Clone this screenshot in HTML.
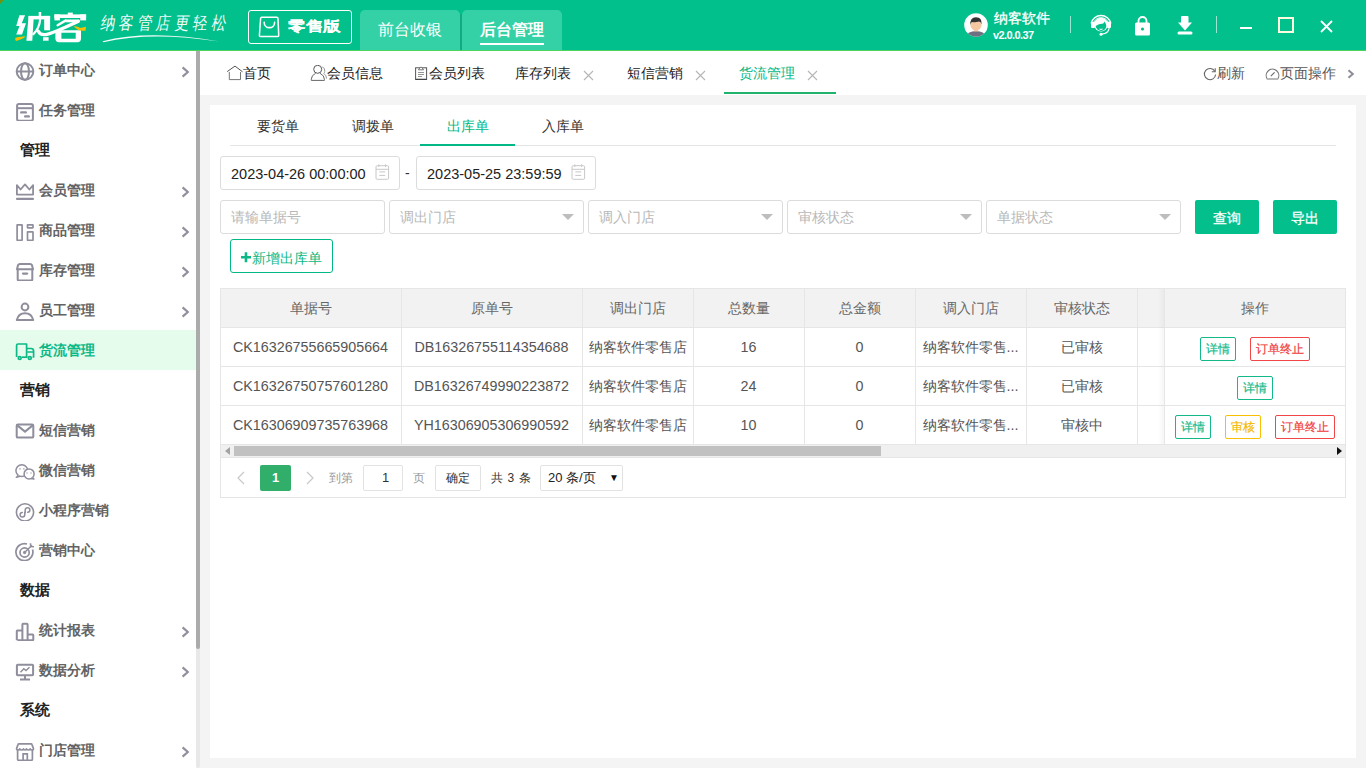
<!DOCTYPE html>
<html><head><meta charset="utf-8">
<style>
*{box-sizing:border-box;margin:0;padding:0}
html,body{width:1366px;height:768px;overflow:hidden;background:#f4f4f4;font-family:"Liberation Sans",sans-serif;font-size:14px;color:#333}
.a{position:absolute;white-space:nowrap}
#hdr{position:absolute;left:0;top:0;width:1366px;height:51px;background:#02c08c;border-bottom:1px solid #4cd55e}
#side{position:absolute;left:0;top:51px;width:196px;height:717px;background:#fff}
#sb{position:absolute;left:196px;top:51px;width:4px;height:717px;background:#e8e8e8;border-radius:0 0 2px 2px}
#sbt{position:absolute;left:196px;top:51px;width:4px;height:598px;background:#ababab;border-radius:0 0 2px 2px}
.mi{position:absolute;left:0;width:196px;height:40px}
.mi .t{position:absolute;left:39px;top:0;line-height:40px;font-weight:bold;color:#636363;font-size:14px}
.mi .ic{position:absolute;left:15px;top:10.5px;width:20px;height:20px}
.mi .ch{position:absolute;left:181px;top:15.5px;width:10px;height:12px}
.sec{position:absolute;left:20px;font-weight:bold;font-size:15px;color:#222;line-height:40px}
#tabs{position:absolute;left:200px;top:51px;width:1166px;height:44px;background:#fff}
.tb{position:absolute;top:0;line-height:44px;font-size:14px;color:#222}
#panel{position:absolute;left:210px;top:105px;width:1146px;height:653px;background:#fff}
</style></head><body>
<div id="hdr">
<svg class="a" style="left:0;top:0" width="5" height="5"><path d="M0 0 H4 L0 4Z" fill="#6e9410"/></svg>
<svg class="a" style="left:0;top:0" width="95" height="50" viewBox="0 0 95 50">
<g fill="#fff">
<path d="M19.4 15.2 H25.1 L21.7 23.3 H26 L22 34.6 H16.2 L19.6 26.1 H16.2 Z"/>
<path d="M28.6 15.9 H33.8 L32.3 40.7 H26.4 Z"/>
<rect x="28.6" y="15.9" width="21.5" height="3.5"/>
<rect x="38.7" y="12" width="2.5" height="7"/>
<rect x="44.2" y="15.9" width="5.9" height="14.4"/>
<rect x="43" y="37.2" width="5.6" height="3.5"/>
<rect x="54.4" y="14.4" width="31.7" height="3.6"/>
<rect x="54.4" y="14.4" width="5.5" height="6"/>
<rect x="80.2" y="14.4" width="5.9" height="6"/>
<rect x="67.8" y="12.6" width="5" height="3"/>
<rect x="65.5" y="19.5" width="13.2" height="2.8"/>
<path d="M56.5 30.3 H81 V38.5 Q81 42.2 77.5 42.2 H59 Q55.4 42.2 55.4 38.5 V31.5 Z M61.4 32.8 V38.7 H75.7 V32.8 Z" fill-rule="evenodd"/>
</g>
<g stroke="#fff" fill="none" stroke-linecap="round">
<path d="M40.2 19 Q39.6 28 33.3 34.3" stroke-width="2.2"/>
<path d="M57.6 25.2 L65.5 20.6" stroke-width="2.4"/>
<path d="M38.3 31.2 Q40 35.4 46 34.6 Q52 33.5 78.5 21.2" stroke-width="3.2"/>
</g>
<path d="M15.2 38.6 Q15.6 37 19 36.9 L25.4 36.2 Q24.6 38.4 21 39.3 L16.2 40.9 Q15 40.4 15.2 38.6Z" fill="#f7bd00"/>
<path d="M73.7 26.3 Q77 25.6 80.2 28 L86 26.8 L85.6 30.4 Q82 31.2 78.4 29.9 Q75.4 28.6 73.7 26.3Z" fill="#f7bd00"/>
</svg>
<div class="a" style="left:101px;top:11.5px;font-size:14.5px;line-height:22px;color:#fff;letter-spacing:3.5px;transform:skewX(-10deg) scaleY(1.22);transform-origin:0 50%;font-family:'Liberation Serif',serif;opacity:.95">纳客管店更轻松</div>
<svg class="a" style="left:0;top:0" width="240" height="50"><path d="M102.5 41.2 Q150 29.2 219.5 41.6 Q150 30.9 103.5 42.3 Z" fill="#fff" opacity=".95"/></svg>
<div class="a" style="left:248px;top:10px;width:104px;height:34px;border:1.5px solid #fff;border-radius:3px"></div>
<svg class="a" style="left:258px;top:16px" width="23" height="22" viewBox="0 0 23 22"><path d="M3.8 1.3 H18.8 Q19.9 1.3 20 2.5 L20.7 19.4 Q20.7 20.6 19.5 20.6 H2.6 Q1.4 20.6 1.4 19.4 L2.6 2.5 Q2.7 1.3 3.8 1.3Z" stroke="#fff" stroke-width="1.5" fill="none"/><path d="M6.2 6.4 C6.2 13.4 16.6 13.4 16.6 6.4" stroke="#fff" stroke-width="1.6" fill="none" stroke-linecap="round"/></svg>
<div class="a" style="left:288px;top:15px;font-size:17px;line-height:24px;font-weight:bold;color:#fff;transform:scaleY(.8);transform-origin:0 55%;-webkit-text-stroke:.15px #fff;letter-spacing:.6px">零售版</div>
<div class="a" style="left:460px;top:14px;width:2px;height:36px;background:#12ab80"></div><div class="a" style="left:360px;top:10px;width:100.3px;height:40px;background:#33d1a5;border-radius:5px 5px 0 0"></div>
<div class="a" style="left:378px;top:18px;font-size:16px;line-height:24px;color:#fff">前台收银</div>
<div class="a" style="left:461.6px;top:10px;width:100.4px;height:40px;background:#33d1a5;border-radius:5px 5px 0 0"></div>
<div class="a" style="left:480px;top:18px;font-size:16px;line-height:24px;color:#fff;font-weight:bold">后台管理</div>
<div class="a" style="left:480px;top:43px;width:64px;height:2px;background:#fff"></div>
<svg class="a" style="left:964px;top:13px" width="24" height="24" viewBox="0 0 24 24"><defs><clipPath id="av"><circle cx="12" cy="12" r="11.8"/></clipPath></defs>
<circle cx="12" cy="12" r="11.8" fill="#fff"/><g clip-path="url(#av)">
<ellipse cx="12" cy="23.5" rx="9.5" ry="5.6" fill="#6f7183"/>
<rect x="10.2" y="14.5" width="3.6" height="4" fill="#f0c09a"/>
<ellipse cx="12" cy="12.3" rx="5.5" ry="5.3" fill="#f5c8a2"/>
<path d="M6.3 12 Q5.8 4.3 12 4.2 Q18.2 4.3 17.6 11.5 Q16.8 8.6 15 8.6 Q11 9.6 8 8.9 Q6.9 9.5 6.3 12Z" fill="#333"/>
</g></svg>
<div class="a" style="left:994px;top:9px;font-size:14px;line-height:18px;color:#fff;font-weight:normal;-webkit-text-stroke:.3px #fff">纳客软件</div>
<div class="a" style="left:993px;top:28px;font-size:11px;line-height:14px;color:#fff;font-weight:bold;letter-spacing:-.6px">v2.0.0.37</div>
<div class="a" style="left:1070px;top:16px;width:1px;height:17px;background:rgba(255,255,255,.6)"></div>
<svg class="a" style="left:1089px;top:13px" width="24" height="24" viewBox="0 0 24 24">
 <path d="M2.2 10.5 A10 10 0 0 1 21.8 10.5" stroke="#fff" stroke-width="1.6" fill="none"/>
 <path d="M5 9 A7.8 7.8 0 0 1 19 9" stroke="#fff" stroke-width=".9" fill="none"/>
 <rect x="2" y="8.7" width="4" height="6.3" rx="1" fill="#fff"/><rect x="18" y="8.7" width="4" height="6.3" rx="1" fill="#fff"/>
 <circle cx="12" cy="11.6" r="6.9" fill="#fff"/>
 <path d="M6.6 13 Q9.5 10.9 14.3 10.5 L15.4 8.6 Q17 10.5 17.3 13 Q17 17.4 12 17.9 Q7.6 17.6 6.6 13Z" fill="#02c08c"/>
 <path d="M10.4 16 Q12 16.9 13.6 16" stroke="#fff" stroke-width="1" fill="none"/>
 <path d="M20.2 14.8 Q19.6 20.6 12.8 21.2" stroke="#fff" stroke-width="1.2" fill="none"/><circle cx="12" cy="21.2" r="1.5" fill="#fff"/>
</svg>
<svg class="a" style="left:1134px;top:15px" width="17" height="21" viewBox="0 0 17 21">
 <path d="M4.5 8 V6 A4 4 0 0 1 12.5 6 V8" stroke="#fff" stroke-width="1.8" fill="none"/>
 <rect x="1" y="7.5" width="15" height="13" rx="1.5" fill="#fff"/><circle cx="8.5" cy="14" r="1.6" fill="#02c08c"/>
</svg>
<svg class="a" style="left:1177px;top:15px" width="16" height="20" viewBox="0 0 16 20">
 <rect x="4" y="1" width="7.5" height="7" rx="1" fill="#fff"/><path d="M1 7.5 H15 L8 15.5 Z" fill="#fff"/><rect x="0.5" y="16.5" width="15" height="3" rx="1.5" fill="#fff"/>
</svg>
<div class="a" style="left:1216px;top:16px;width:1px;height:17px;background:rgba(255,255,255,.6)"></div>
<div class="a" style="left:1240px;top:27px;width:12px;height:2px;background:#fff"></div>
<div class="a" style="left:1278px;top:17px;width:16px;height:16px;border:2px solid #fffce0"></div>
<svg class="a" style="left:1320px;top:20px" width="13" height="13" viewBox="0 0 13 13"><path d="M1 1 L12 12 M12 1 L1 12" stroke="#fff" stroke-width="1.8"/></svg>
</div>
<div id="side">
<div class="mi" style="top:-1px"><svg class="ic" viewBox="0 0 20 20" fill="none" stroke="#8e8e9c" stroke-width="2.0"><circle cx="10" cy="10.5" r="8.3"/><ellipse cx="10" cy="10.5" rx="4" ry="8.3"/><path d="M1.7 10.5 H18.3"/></svg><div class="t" style="">订单中心</div><svg class="ch" viewBox="0 0 10 12"><path d="M1.6 1.4 L6.8 6 L1.6 10.6" stroke="#8e8e9c" stroke-width="2.1" fill="none"/></svg></div>
<div class="mi" style="top:39px"><svg class="ic" viewBox="0 0 20 20" fill="none" stroke="#8e8e9c" stroke-width="2.0"><rect x="2.1" y="3" width="15.8" height="16.7" rx="1.8"/><path d="M2.1 7.2 H17.9"/><path d="M6.2 11.4 H10.8 M10.2 15.4 H13.8" stroke-width="2.4" stroke-linecap="round"/></svg><div class="t" style="">任务管理</div></div>
<div class="sec" style="top:79px">管理</div>
<div class="mi" style="top:119px"><svg class="ic" viewBox="0 0 20 20" fill="none" stroke="#8e8e9c" stroke-width="2.0"><path d="M1.9 13.6 V4.2 L5.6 8.5 L10 3.4 L14.4 8.5 L18.1 4.2 V13.6 Z" stroke-linejoin="round" stroke-width="1.8"/><path d="M2.1 17.9 H17.9" stroke-width="2.3" stroke-linecap="round"/></svg><div class="t" style="">会员管理</div><svg class="ch" viewBox="0 0 10 12"><path d="M1.6 1.4 L6.8 6 L1.6 10.6" stroke="#8e8e9c" stroke-width="2.1" fill="none"/></svg></div>
<div class="mi" style="top:159px"><svg class="ic" viewBox="0 0 20 20" fill="none" stroke="#8e8e9c" stroke-width="2.0"><rect x="2.1" y="3.8" width="5" height="15.5" rx=".3" stroke-width="1.7"/><rect x="12.5" y="3.8" width="5.5" height="3.1" rx=".3" stroke-width="1.7"/><rect x="12.5" y="10.8" width="5.5" height="8.5" rx=".3" stroke-width="1.7"/></svg><div class="t" style="">商品管理</div><svg class="ch" viewBox="0 0 10 12"><path d="M1.6 1.4 L6.8 6 L1.6 10.6" stroke="#8e8e9c" stroke-width="2.1" fill="none"/></svg></div>
<div class="mi" style="top:199px"><svg class="ic" viewBox="0 0 20 20" fill="none" stroke="#8e8e9c" stroke-width="2.0"><path d="M2 8.2 L3 4.2 Q3.5 3 5 3 H15 Q16.5 3 17 4.2 L18 8.2 Z" stroke-linejoin="round"/><path d="M2.7 8.2 V18.3 Q2.7 19.6 4 19.6 H16 Q17.3 19.6 17.3 18.3 V8.2"/><path d="M8 12.6 H12.2" stroke-width="2.2" stroke-linecap="round"/></svg><div class="t" style="">库存管理</div><svg class="ch" viewBox="0 0 10 12"><path d="M1.6 1.4 L6.8 6 L1.6 10.6" stroke="#8e8e9c" stroke-width="2.1" fill="none"/></svg></div>
<div class="mi" style="top:239px"><svg class="ic" viewBox="0 0 20 20" fill="none" stroke="#8e8e9c" stroke-width="2.0"><circle cx="10" cy="6" r="3.4"/><path d="M1.8 19 Q3.5 12.3 10 12.3 Q16.5 12.3 18.2 19 Z" stroke-linejoin="round"/></svg><div class="t" style="">员工管理</div><svg class="ch" viewBox="0 0 10 12"><path d="M1.6 1.4 L6.8 6 L1.6 10.6" stroke="#8e8e9c" stroke-width="2.1" fill="none"/></svg></div>
<div class="mi" style="top:279px;background:#e5fced"><svg class="ic" viewBox="0 0 20 20" fill="none" stroke="#0cb886" stroke-width="1.7"><path d="M1.6 16 V4.5 Q1.6 3 3 3 H11.6 V16" stroke-linejoin="round"/><path d="M11.6 7.5 H16 Q18.6 7.5 18.6 10 V16 H17.5 M12.2 11 H18.3" stroke-linejoin="round"/><path d="M7 16.2 H12.5"/><circle cx="4.7" cy="17" r="1.45" fill="#e5fced"/><circle cx="14.8" cy="17" r="1.45" fill="#e5fced"/></svg><div class="t" style=";color:#0cb886">货流管理</div></div>
<div class="sec" style="top:319px">营销</div>
<div class="mi" style="top:359px"><svg class="ic" viewBox="0 0 20 20" fill="none" stroke="#8e8e9c" stroke-width="2.0"><rect x="1.7" y="3.6" width="16.6" height="13" rx="1.2"/><path d="M2.3 4.4 L10 10.6 L17.7 4.4"/></svg><div class="t" style="">短信营销</div></div>
<div class="mi" style="top:399px"><svg class="ic" viewBox="0 0 20 20" fill="none" stroke="#8e8e9c" stroke-width="2.0"><circle cx="6.8" cy="9.6" r="5.9" stroke-width="1.5"/><path d="M3.3 14.2 L1.3 16.4 L5.2 15.3" stroke-width="1.4" stroke-linejoin="round" fill="#fff"/><circle cx="14.1" cy="12.9" r="5" fill="#fff" stroke-width="1.5"/><path d="M17.4 16.4 L19 18.1 L15.8 17.5" stroke-width="1.4" stroke-linejoin="round" fill="#fff"/><path d="M4.4 7.9 H5.6 M8.3 7.9 H9.5 M11.4 12 H12.6 M15.4 12 H16.6" stroke-width="1.2"/></svg><div class="t" style="">微信营销</div></div>
<div class="mi" style="top:439px"><svg class="ic" viewBox="0 0 20 20" fill="none" stroke="#8e8e9c" stroke-width="2.0"><circle cx="10" cy="11.4" r="8.6" stroke-width="1.6"/><path d="M9.8 10.9 V13.5 Q9.8 16 7.4 16 Q5.1 16 5.1 13.7 Q5.1 11.6 7.3 11.5 M10.2 11.9 V9.3 Q10.2 6.8 12.6 6.8 Q14.9 6.8 14.9 9.1 Q14.9 11.2 12.7 11.3" stroke-width="1.5" stroke-linecap="round"/></svg><div class="t" style="">小程序营销</div></div>
<div class="mi" style="top:479px"><svg class="ic" viewBox="0 0 20 20" fill="none" stroke="#8e8e9c" stroke-width="2.0"><path d="M17.5 8.5 A8.5 8.5 0 1 1 12 3" stroke-width="1.7"/><circle cx="9.6" cy="11.5" r="4.6" stroke-width="1.7"/><circle cx="9.6" cy="11.5" r="1.2" fill="#8e8e9c" stroke-width="1"/><path d="M9.6 11.5 L17 4.2" stroke-width="1.5"/><path d="M15.5 2.2 L15.7 5.5 L19 5.8" stroke-width="1.5"/></svg><div class="t" style="">营销中心</div></div>
<div class="sec" style="top:519px">数据</div>
<div class="mi" style="top:559px"><svg class="ic" viewBox="0 0 20 20" fill="none" stroke="#8e8e9c" stroke-width="2.0"><path d="M1.8 19.2 V10.2 Q1.8 9.6 2.4 9.6 H7.4 V19.2 M7.4 19.2 V3.6 Q7.4 2.8 8.2 2.8 H11.8 Q12.6 2.8 12.6 3.6 V19.2 M12.6 13.6 H17.6 Q18.3 13.6 18.3 14.3 V18.6 Q18.3 19.2 17.7 19.2 H2.4" stroke-linejoin="round"/></svg><div class="t" style="">统计报表</div><svg class="ch" viewBox="0 0 10 12"><path d="M1.6 1.4 L6.8 6 L1.6 10.6" stroke="#8e8e9c" stroke-width="2.1" fill="none"/></svg></div>
<div class="mi" style="top:599px"><svg class="ic" viewBox="0 0 20 20" fill="none" stroke="#8e8e9c" stroke-width="2.0"><rect x="1.9" y="3.7" width="16.2" height="10.6" rx=".8"/><path d="M5.5 11.2 L8.8 7.7 L11 9.6 L14.5 6.3" stroke-width="1.5"/><path d="M10 14.3 V18 M5 18.6 H15" stroke-width="2"/></svg><div class="t" style="">数据分析</div><svg class="ch" viewBox="0 0 10 12"><path d="M1.6 1.4 L6.8 6 L1.6 10.6" stroke="#8e8e9c" stroke-width="2.1" fill="none"/></svg></div>
<div class="sec" style="top:639px">系统</div>
<div class="mi" style="top:679px"><svg class="ic" viewBox="0 0 20 20" fill="none" stroke="#8e8e9c" stroke-width="2.0"><path d="M4 2.9 H16 Q16.8 2.9 17 3.6 L18.5 7.8 Q18.3 9 17 9 Q15.3 9 15.2 7.8 Q14.7 9 13.3 9 Q11.5 9 11.5 7.8 Q11 9 10 9 Q8.5 9 8.5 7.8 Q8 9 6.7 9 Q5 9 4.8 7.8 Q4.5 9 3 9 Q1.5 9 1.5 7.8 L3 3.6 Q3.2 2.9 4 2.9Z" stroke-width="1.7" stroke-linejoin="round"/><path d="M2.6 9 V18.3 Q2.6 19.3 3.6 19.3 H16.4 Q17.4 19.3 17.4 18.3 V9" stroke-width="1.7"/><path d="M8.1 19.3 V12.8 H12.3 V19.3" stroke-width="1.7"/></svg><div class="t" style="">门店管理</div><svg class="ch" viewBox="0 0 10 12"><path d="M1.6 1.4 L6.8 6 L1.6 10.6" stroke="#8e8e9c" stroke-width="2.1" fill="none"/></svg></div>
</div>
<div id="sb"></div><div id="sbt"></div>
<div id="tabs">
<svg class="a" style="left:26px;top:14px" width="18" height="16" viewBox="0 0 18 16"><path d="M1.2 6.6 L9 1.1 L16.5 6.8" stroke="#555" stroke-width="1" fill="none"/><path d="M3.3 7 V14.6 H14.5 V7" stroke="#777" stroke-width="1" fill="none"/></svg>
<div class="tb" style="left:43px">首页</div>
<svg class="a" style="left:110px;top:14px" width="18" height="17" viewBox="0 0 18 17"><circle cx="7.7" cy="4.3" r="4" stroke="#555" stroke-width="1" fill="none"/><path d="M5.6 8.3 Q1.3 10.3 1.3 14.3 V15.4 H14.4 V14.3 Q14.4 10.3 10 8.3" stroke="#666" stroke-width="1" fill="none"/><path d="M12.2 1.9 Q15.2 2.6 14.8 6.6 Q14.5 8 13.9 8.4 Q16.4 10.3 16.6 13.6" stroke="#999" stroke-width="1" fill="none"/></svg>
<div class="tb" style="left:127px">会员信息</div>
<svg class="a" style="left:214px;top:14px" width="14" height="16" viewBox="0 0 14 16"><rect x="1.6" y="2.8" width="11" height="11.6" stroke="#555" stroke-width="1" fill="none"/><path d="M1.6 14.4 H12.6" stroke="#444" stroke-width="1.2"/><path d="M4.4 4.8 L6.1 2.7 Q7 1.2 7.9 2.7 L9.6 4.8 Z" fill="#fff" stroke="#666" stroke-width=".9"/><path d="M4 7.5 H10 M4 9.5 H10 M4 11.5 H8" stroke="#888" stroke-width=".9"/></svg>
<div class="tb" style="left:229px">会员列表</div>
<div class="tb" style="left:315px">库存列表</div>
<svg class="a" style="left:383px;top:18.5px" width="11" height="11" viewBox="0 0 11 11"><path d="M1 1 L10 10 M10 1 L1 10" stroke="#b5b5b5" stroke-width="1.1"/></svg>
<div class="tb" style="left:427px">短信营销</div>
<svg class="a" style="left:495px;top:18.5px" width="11" height="11" viewBox="0 0 11 11"><path d="M1 1 L10 10 M10 1 L1 10" stroke="#b5b5b5" stroke-width="1.1"/></svg>
<div class="tb" style="left:539px;color:#02b886">货流管理</div>
<svg class="a" style="left:607px;top:18.5px" width="11" height="11" viewBox="0 0 11 11"><path d="M1 1 L10 10 M10 1 L1 10" stroke="#b5b5b5" stroke-width="1.1"/></svg>
<div class="a" style="left:524px;top:41px;width:112px;height:2px;background:#1fb36b"></div>
<svg class="a" style="left:1003px;top:16px" width="14" height="14" viewBox="0 0 14 14"><path d="M11.8 4.2 A5.6 5.6 0 1 0 12.6 7.5" stroke="#666" stroke-width="1.1" fill="none"/><path d="M12.2 1.3 V4.8 H8.8" stroke="#666" stroke-width="1.1" fill="none"/></svg>
<div class="tb" style="left:1017px;color:#555">刷新</div>
<svg class="a" style="left:1065px;top:16px" width="15" height="13" viewBox="0 0 15 13"><path d="M2.3 12 A6.3 6.3 0 1 1 12.7 12 Z" stroke="#777" stroke-width="1.1" fill="none"/><path d="M1.8 12 H13.2" stroke="#bbb" stroke-width="1.6"/><path d="M5.8 9.2 L9.6 5.4" stroke="#666" stroke-width="1.1"/></svg>
<div class="tb" style="left:1080px;color:#555">页面操作</div>
<svg class="a" style="left:1146px;top:18px" width="10" height="10" viewBox="0 0 10 10"><path d="M2.5 1.2 L6.8 5 L2.5 8.8" stroke="#8c8c9b" stroke-width="2" fill="none"/></svg>
</div>
<div id="panel"></div>
<div id="content"><div class="a" style="left:257px;top:116px;line-height:20px;font-size:14px;color:#333">要货单</div>
<div class="a" style="left:352px;top:116px;line-height:20px;font-size:14px;color:#333">调拨单</div>
<div class="a" style="left:447px;top:116px;line-height:20px;font-size:14px;color:#02b886">出库单</div>
<div class="a" style="left:542px;top:116px;line-height:20px;font-size:14px;color:#333">入库单</div>
<div class="a" style="left:230px;top:145px;width:1106px;height:1px;background:#e6e6e6"></div>
<div class="a" style="left:420px;top:144px;width:95px;height:2px;background:#02b886"></div>
<div class="a" style="left:220px;top:156px;width:180px;height:34px;border:1px solid #dcdcdc;border-radius:3px"></div>
<div class="a" style="left:231px;top:163.5px;line-height:20px;font-size:14.5px;color:#222">2023-04-26 00:00:00</div>
<svg class="a" style="left:375px;top:164px" width="15" height="16" viewBox="0 0 15 16"><rect x="1" y="1.7" width="12.6" height="13.6" rx="1.2" stroke="#c8c8c8" stroke-width="1" fill="none"/><path d="M3.8 .3 V3 M10.6 .3 V3 M1 5.3 H13.6 M4.3 7.9 H10.2 M4.3 11.4 H10.2" stroke="#c8c8c8" stroke-width="1"/></svg>
<div class="a" style="left:416px;top:156px;width:180px;height:34px;border:1px solid #dcdcdc;border-radius:3px"></div>
<div class="a" style="left:427px;top:163.5px;line-height:20px;font-size:14.5px;color:#222">2023-05-25 23:59:59</div>
<svg class="a" style="left:571px;top:164px" width="15" height="16" viewBox="0 0 15 16"><rect x="1" y="1.7" width="12.6" height="13.6" rx="1.2" stroke="#c8c8c8" stroke-width="1" fill="none"/><path d="M3.8 .3 V3 M10.6 .3 V3 M1 5.3 H13.6 M4.3 7.9 H10.2 M4.3 11.4 H10.2" stroke="#c8c8c8" stroke-width="1"/></svg>
<div class="a" style="left:405px;top:163px;line-height:20px;font-size:14px;color:#333">-</div>
<div class="a" style="left:220px;top:200px;width:165px;height:34px;border:1px solid #dcdcdc;border-radius:3px"></div>
<div class="a" style="left:231px;top:207px;line-height:20px;font-size:14px;color:#b8b8b8">请输单据号</div>
<div class="a" style="left:389px;top:200px;width:195px;height:34px;border:1px solid #dcdcdc;border-radius:3px"></div>
<div class="a" style="left:400px;top:207px;line-height:20px;font-size:14px;color:#b8b8b8">调出门店</div>
<svg class="a" style="left:562px;top:214px" width="12" height="6" viewBox="0 0 12 6"><path d="M0 0 H12 L6 6Z" fill="#bdbdbd"/></svg>
<div class="a" style="left:588px;top:200px;width:195px;height:34px;border:1px solid #dcdcdc;border-radius:3px"></div>
<div class="a" style="left:599px;top:207px;line-height:20px;font-size:14px;color:#b8b8b8">调入门店</div>
<svg class="a" style="left:761px;top:214px" width="12" height="6" viewBox="0 0 12 6"><path d="M0 0 H12 L6 6Z" fill="#bdbdbd"/></svg>
<div class="a" style="left:787px;top:200px;width:195px;height:34px;border:1px solid #dcdcdc;border-radius:3px"></div>
<div class="a" style="left:798px;top:207px;line-height:20px;font-size:14px;color:#b8b8b8">审核状态</div>
<svg class="a" style="left:960px;top:214px" width="12" height="6" viewBox="0 0 12 6"><path d="M0 0 H12 L6 6Z" fill="#bdbdbd"/></svg>
<div class="a" style="left:986px;top:200px;width:195px;height:34px;border:1px solid #dcdcdc;border-radius:3px"></div>
<div class="a" style="left:997px;top:207px;line-height:20px;font-size:14px;color:#b8b8b8">单据状态</div>
<svg class="a" style="left:1159px;top:214px" width="12" height="6" viewBox="0 0 12 6"><path d="M0 0 H12 L6 6Z" fill="#bdbdbd"/></svg>
<div class="a" style="left:1195px;top:200px;width:64px;height:34px;background:#02bf8b;border-radius:2px;color:#fff;font-size:14px;line-height:36px;text-align:center;-webkit-text-stroke:.3px #fff">查询</div>
<div class="a" style="left:1273px;top:200px;width:64px;height:34px;background:#02bf8b;border-radius:2px;color:#fff;font-size:14px;line-height:36px;text-align:center;-webkit-text-stroke:.3px #fff">导出</div>
<div class="a" style="left:230px;top:239px;width:103px;height:34px;border:1px solid #02b886;border-radius:3px"></div>
<svg class="a" style="left:241px;top:252px" width="10" height="11"><path d="M0 5.3 H10 M5 0.3 V10.3" stroke="#0cb886" stroke-width="2.6"/></svg><div class="a" style="left:251.5px;top:247.5px;line-height:20px;font-size:14px;color:#0cb886;letter-spacing:.2px">新增出库单</div>
<div class="a" style="left:220px;top:288px;width:1126px;height:210px;border:1px solid #e6e6e6"></div>
<div class="a" style="left:221px;top:289px;width:1124px;height:38px;background:#f2f2f2"></div>
<div class="a" style="left:221px;top:327px;width:1124px;height:1px;background:#e6e6e6"></div>
<div class="a" style="left:221px;top:366px;width:1124px;height:1px;background:#e6e6e6"></div>
<div class="a" style="left:221px;top:405px;width:1124px;height:1px;background:#e6e6e6"></div>
<div class="a" style="left:221px;top:444px;width:1124px;height:1px;background:#e6e6e6"></div>
<div class="a" style="left:401px;top:289px;width:1px;height:155px;background:#e6e6e6"></div>
<div class="a" style="left:582px;top:289px;width:1px;height:155px;background:#e6e6e6"></div>
<div class="a" style="left:693px;top:289px;width:1px;height:155px;background:#e6e6e6"></div>
<div class="a" style="left:804px;top:289px;width:1px;height:155px;background:#e6e6e6"></div>
<div class="a" style="left:915px;top:289px;width:1px;height:155px;background:#e6e6e6"></div>
<div class="a" style="left:1026px;top:289px;width:1px;height:155px;background:#e6e6e6"></div>
<div class="a" style="left:1137px;top:289px;width:1px;height:155px;background:#e6e6e6"></div>
<div class="a" style="left:220px;top:298px;width:181px;line-height:20px;text-align:center;font-size:14px;color:#666">单据号</div>
<div class="a" style="left:401px;top:298px;width:181px;line-height:20px;text-align:center;font-size:14px;color:#666">原单号</div>
<div class="a" style="left:582px;top:298px;width:111px;line-height:20px;text-align:center;font-size:14px;color:#666">调出门店</div>
<div class="a" style="left:693px;top:298px;width:111px;line-height:20px;text-align:center;font-size:14px;color:#666">总数量</div>
<div class="a" style="left:804px;top:298px;width:111px;line-height:20px;text-align:center;font-size:14px;color:#666">总金额</div>
<div class="a" style="left:915px;top:298px;width:111px;line-height:20px;text-align:center;font-size:14px;color:#666">调入门店</div>
<div class="a" style="left:1026px;top:298px;width:111px;line-height:20px;text-align:center;font-size:14px;color:#666">审核状态</div>
<div class="a" style="left:220px;top:337px;width:181px;line-height:20px;text-align:center;font-size:14.3px;color:#555">CK16326755665905664</div>
<div class="a" style="left:401px;top:337px;width:181px;line-height:20px;text-align:center;font-size:14.3px;color:#555">DB16326755114354688</div>
<div class="a" style="left:582px;top:337px;width:111px;line-height:20px;text-align:center;font-size:14.3px;color:#555">纳客软件零售店</div>
<div class="a" style="left:693px;top:337px;width:111px;line-height:20px;text-align:center;font-size:14.3px;color:#555">16</div>
<div class="a" style="left:804px;top:337px;width:111px;line-height:20px;text-align:center;font-size:14.3px;color:#555">0</div>
<div class="a" style="left:915px;top:337px;width:111px;line-height:20px;text-align:center;font-size:14.3px;color:#555">纳客软件零售...</div>
<div class="a" style="left:1026px;top:337px;width:111px;line-height:20px;text-align:center;font-size:14.3px;color:#555">已审核</div>
<div class="a" style="left:220px;top:376px;width:181px;line-height:20px;text-align:center;font-size:14.3px;color:#555">CK16326750757601280</div>
<div class="a" style="left:401px;top:376px;width:181px;line-height:20px;text-align:center;font-size:14.3px;color:#555">DB16326749990223872</div>
<div class="a" style="left:582px;top:376px;width:111px;line-height:20px;text-align:center;font-size:14.3px;color:#555">纳客软件零售店</div>
<div class="a" style="left:693px;top:376px;width:111px;line-height:20px;text-align:center;font-size:14.3px;color:#555">24</div>
<div class="a" style="left:804px;top:376px;width:111px;line-height:20px;text-align:center;font-size:14.3px;color:#555">0</div>
<div class="a" style="left:915px;top:376px;width:111px;line-height:20px;text-align:center;font-size:14.3px;color:#555">纳客软件零售...</div>
<div class="a" style="left:1026px;top:376px;width:111px;line-height:20px;text-align:center;font-size:14.3px;color:#555">已审核</div>
<div class="a" style="left:220px;top:415px;width:181px;line-height:20px;text-align:center;font-size:14.3px;color:#555">CK16306909735763968</div>
<div class="a" style="left:401px;top:415px;width:181px;line-height:20px;text-align:center;font-size:14.3px;color:#555">YH16306905306990592</div>
<div class="a" style="left:582px;top:415px;width:111px;line-height:20px;text-align:center;font-size:14.3px;color:#555">纳客软件零售店</div>
<div class="a" style="left:693px;top:415px;width:111px;line-height:20px;text-align:center;font-size:14.3px;color:#555">10</div>
<div class="a" style="left:804px;top:415px;width:111px;line-height:20px;text-align:center;font-size:14.3px;color:#555">0</div>
<div class="a" style="left:915px;top:415px;width:111px;line-height:20px;text-align:center;font-size:14.3px;color:#555">纳客软件零售...</div>
<div class="a" style="left:1026px;top:415px;width:111px;line-height:20px;text-align:center;font-size:14.3px;color:#555">审核中</div>
<div class="a" style="left:1158px;top:289px;width:6px;height:155px;background:linear-gradient(to right,rgba(0,0,0,0),rgba(0,0,0,.035))"></div>
<div class="a" style="left:1164px;top:289px;width:181px;height:38px;background:#f2f2f2;border-left:1px solid #e6e6e6"></div>
<div class="a" style="left:1164px;top:298px;width:182px;line-height:20px;text-align:center;font-size:14px;color:#666">操作</div>
<div class="a" style="left:1164px;top:328px;width:181px;height:38px;background:#fff;border-left:1px solid #e6e6e6"></div>
<div class="a" style="left:1164px;top:367px;width:181px;height:38px;background:#fff;border-left:1px solid #e6e6e6"></div>
<div class="a" style="left:1164px;top:406px;width:181px;height:38px;background:#fff;border-left:1px solid #e6e6e6"></div>
<div class="a" style="left:1200px;top:337px;width:36px;height:24px;border:1px solid #14b98a;border-radius:2px;color:#14b98a;font-size:12px;line-height:23px;-webkit-text-stroke:.2px #14b98a;text-align:center">详情</div>
<div class="a" style="left:1250px;top:337px;width:60px;height:24px;border:1px solid #f04646;border-radius:2px;color:#f04040;font-size:12px;line-height:23px;-webkit-text-stroke:.2px #f04040;text-align:center">订单终止</div>
<div class="a" style="left:1237px;top:376px;width:36px;height:24px;border:1px solid #14b98a;border-radius:2px;color:#14b98a;font-size:12px;line-height:23px;-webkit-text-stroke:.2px #14b98a;text-align:center">详情</div>
<div class="a" style="left:1175px;top:415px;width:36px;height:24px;border:1px solid #14b98a;border-radius:2px;color:#14b98a;font-size:12px;line-height:23px;-webkit-text-stroke:.2px #14b98a;text-align:center">详情</div>
<div class="a" style="left:1225px;top:415px;width:36px;height:24px;border:1px solid #f8c000;border-radius:2px;color:#f5b800;font-size:12px;line-height:23px;-webkit-text-stroke:.2px #f5b800;text-align:center">审核</div>
<div class="a" style="left:1275px;top:415px;width:60px;height:24px;border:1px solid #f04646;border-radius:2px;color:#f04040;font-size:12px;line-height:23px;-webkit-text-stroke:.2px #f04040;text-align:center">订单终止</div>
<div class="a" style="left:221px;top:445px;width:1124px;height:13px;background:#f0f0f0;border-bottom:1px solid #e6e6e6"></div>
<div class="a" style="left:234px;top:446px;width:647px;height:10px;background:#c1c1c1"></div>
<svg class="a" style="left:225px;top:447px" width="5" height="8" viewBox="0 0 5 8"><path d="M5 0 V8 L0 4Z" fill="#a3a3a3"/></svg>
<svg class="a" style="left:1337px;top:447px" width="5" height="8" viewBox="0 0 5 8"><path d="M0 0 V8 L5 4Z" fill="#111"/></svg>
<svg class="a" style="left:236px;top:471px" width="10" height="14" viewBox="0 0 10 14"><path d="M8 1 L2 7 L8 13" stroke="#c8c8c8" stroke-width="1.2" fill="none"/></svg>
<div class="a" style="left:260px;top:465px;width:31px;height:26px;background:#32ae6b;border-radius:2px;color:#fff;font-size:13px;line-height:26px;text-align:center;font-weight:bold">1</div>
<svg class="a" style="left:305px;top:471px" width="10" height="14" viewBox="0 0 10 14"><path d="M2 1 L8 7 L2 13" stroke="#c8c8c8" stroke-width="1.2" fill="none"/></svg>
<div class="a" style="left:329px;top:468px;line-height:20px;font-size:12px;color:#999">到第</div>
<div class="a" style="left:363px;top:465px;width:40px;height:26px;border:1px solid #e2e2e2;border-radius:2px;font-size:13px;line-height:24px;text-align:center;color:#333;padding-left:5px">1</div>
<div class="a" style="left:413px;top:468px;line-height:20px;font-size:12px;color:#999">页</div>
<div class="a" style="left:435px;top:465px;width:46px;height:26px;border:1px solid #e2e2e2;border-radius:2px;font-size:12px;line-height:24px;text-align:center;color:#333">确定</div>
<div class="a" style="left:491px;top:468px;line-height:20px;font-size:12px;color:#333;letter-spacing:.6px">共 3 条</div>
<div class="a" style="left:540px;top:465px;width:83px;height:26px;border:1px solid #e2e2e2;border-radius:2px"></div>
<div class="a" style="left:548px;top:468px;line-height:20px;font-size:13px;color:#222">20 条/页</div>
<div class="a" style="left:609px;top:468px;line-height:20px;font-size:10px;color:#111">▼</div></div>
</body></html>
